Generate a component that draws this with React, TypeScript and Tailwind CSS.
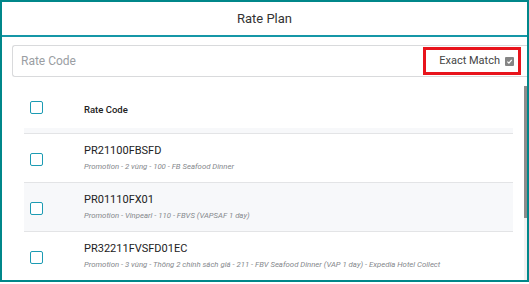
const rows = [
  {
    code: "PR21100FBSFD",
    desc: "Promotion - 2 vùng - 100 - FB Seafood Dinner",
    striped: false,
  },
  {
    code: "PR01110FX01",
    desc: "Promotion - Vinpearl - 110 - FBVS (VAPSAF 1 day)",
    striped: true,
  },
  {
    code: "PR32211FVSFD01EC",
    desc: "Promotion - 3 vùng - Thông 2 chính sách giá - 211 - FBV Seafood Dinner (VAP 1 day) - Expedia Hotel Collect",
    striped: false,
  },
];

function Box() {
  return (
    <span className="block h-[13px] w-[13px] rounded-[2px] border-[1.5px] border-[#1c9bb3] bg-white" />
  );
}

export default function App() {
  return (
    <div className="h-[284px] w-[529px] overflow-hidden bg-white font-['Roboto','Liberation_Sans',sans-serif]">
      <div className="flex h-[282px] w-full flex-col border-2 border-[#00878a]">
        <div className="flex h-[35px] shrink-0 items-center justify-center border-b-2 border-[#1597a7] text-[13px] text-[#333]">
          Rate Plan
        </div>

        <div className="ml-[10px] mt-[8px] flex h-[32px] shrink-0 items-center rounded-l-[3px] border border-r-0 border-[#d9dadc] pl-[8px]">
          <span className="flex-1 text-[12px] text-[#9a9ea3]">Rate Code</span>
          <div className="mr-[6px] flex h-[28px] w-[98px] items-center justify-end gap-[5px] border-[3px] border-[#e8141c] pr-[4px]">
            <span className="text-[11px] text-[#444]">Exact Match</span>
            <span className="flex h-[9px] w-[9px] items-center justify-center rounded-[1px] bg-[#858585]">
              <svg width="7" height="7" viewBox="0 0 10 10">
                <path d="M2 5.2 L4.2 7.4 L8.2 2.8" fill="none" stroke="#fff" strokeWidth="1.8" />
              </svg>
            </span>
          </div>
        </div>

        <div className="mt-[9px] flex min-h-0 flex-1">
          <div className="min-w-0 flex-1 overflow-hidden pl-[22px] pr-[11px]">
            <div className="flex h-[42px] items-center bg-white">
              <div className="w-[60px] pl-[6px] pt-[1px]">
                <Box />
              </div>
              <span className="pt-[6px] text-[9.5px] font-medium text-[#222]">Rate Code</span>
            </div>
            <div className="h-[6px] border-b border-[#e3e4e6] bg-[#f7f8fa]" />
            {rows.map((r) => (
              <div
                key={r.code}
                className={`flex h-[49px] items-center border-b border-[#e3e4e6] ${r.striped ? "bg-[#f7f8fa]" : "bg-white"}`}
              >
                <div className="w-[60px] shrink-0 pl-[6px] pt-[2px]">
                  <Box />
                </div>
                <div className="-mt-[1px] flex min-w-0 flex-col">
                  <span className="text-[11px] leading-[14px] text-[#222]">{r.code}</span>
                  <span className="mt-[4px] whitespace-nowrap text-[7.75px] italic leading-[10px] text-[#85888c]">
                    {r.desc}
                  </span>
                </div>
              </div>
            ))}
          </div>
          <div className="flex w-[3px] shrink-0 flex-col bg-[#f1f1f1]">
            <div className="h-[132px] bg-[#8c8c8c]" />
          </div>
        </div>
      </div>
    </div>
  );
}
